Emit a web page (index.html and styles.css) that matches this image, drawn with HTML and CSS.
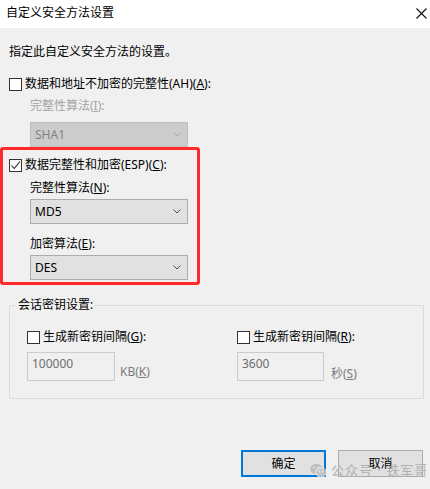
FILE: index.html
```html
<!DOCTYPE html>
<html>
<head>
<meta charset="UTF-8">
<title>自定义安全方法设置</title>
<link rel="stylesheet" href="styles.css">
</head>
<body>
<div class="dialog">
  <div class="titlebar">
    <span class="title">自定义安全方法设置</span>
    <svg class="close" width="11" height="11" viewBox="0 0 11 11"><path d="M0.5 0.5 L10.5 10.5 M10.5 0.5 L0.5 10.5" stroke="#111" stroke-width="1.1" fill="none"/></svg>
  </div>

  <div class="content">
    <p class="intro">指定此自定义安全方法的设置。</p>

    <div class="check ah"><span class="box"></span>数据和地址不加密的完整性(AH)(<u>A</u>):</div>
    <div class="indent">
      <div class="label disabled">完整性算法(<u>I</u>):</div>
      <div class="select disabled">SHA1
        <svg class="chev" width="8" height="5" viewBox="0 0 8 5"><path d="M0.5 0.5 L4 4 L7.5 0.5" stroke="#a8a8a8" fill="none"/></svg>
      </div>
    </div>

    <div class="check esp"><span class="box"><svg width="11" height="11" viewBox="0 0 11 11"><path d="M1.5 5.5 L4.2 8.5 L10 1.5" stroke="#222" stroke-width="1.1" fill="none"/></svg></span>数据完整性和加密(ESP)(<u>C</u>):</div>
    <div class="indent">
      <div class="label first">完整性算法(<u>N</u>):</div>
      <div class="select">MD5
        <svg class="chev" width="8" height="5" viewBox="0 0 8 5"><path d="M0.5 0.5 L4 4 L7.5 0.5" stroke="#555" fill="none"/></svg>
      </div>
      <div class="label second">加密算法(<u>E</u>):</div>
      <div class="select">DES
        <svg class="chev" width="8" height="5" viewBox="0 0 8 5"><path d="M0.5 0.5 L4 4 L7.5 0.5" stroke="#555" fill="none"/></svg>
      </div>
    </div>

    <fieldset class="group">
      <legend>会话密钥设置:</legend>
      <div class="cols">
        <div class="col">
          <div class="check"><span class="box"></span>生成新密钥间隔(<u>G</u>):</div>
          <div class="field">
            <div class="input">100000</div>
            <span class="unit">KB(<u>K</u>)</span>
          </div>
        </div>
        <div class="col">
          <div class="check"><span class="box"></span>生成新密钥间隔(<u>R</u>):</div>
          <div class="field">
            <div class="input short">3600</div>
            <span class="unit sec">秒(<u>S</u>)</span>
          </div>
        </div>
      </div>
    </fieldset>

    <div class="buttons">
      <button class="btn primary">确定</button>
      <button class="btn">取消</button>
    </div>
  </div>

  <div class="highlight"></div>

  <div class="watermark">
    <svg width="17" height="15" viewBox="0 0 17 15">
      <ellipse cx="6.5" cy="6" rx="6.2" ry="5.3" fill="#b9b9b9"/>
      <ellipse cx="11" cy="9.5" rx="5.4" ry="4.6" fill="#c4c4c4" stroke="#efefef" stroke-width="1"/>
      <circle cx="4.3" cy="4.6" r="0.9" fill="#efefef"/>
      <circle cx="8.4" cy="4.6" r="0.9" fill="#efefef"/>
      <circle cx="9.3" cy="8.6" r="0.7" fill="#efefef"/>
      <circle cx="12.7" cy="8.6" r="0.7" fill="#efefef"/>
    </svg>
    <span>公众号 · 铁军哥</span>
  </div>
</div>
</body>
</html>
```

FILE: styles.css
```css
  body {
    margin: 0;
    padding: 0;
    font-family: "Noto Sans", "Noto Sans CJK SC", sans-serif;
    font-size: 12px;
    color: #000;
    background-color: #f0f0f0;
  }

  .dialog {
    position: relative;
    width: 430px;
    height: 489px;
    overflow: hidden;
    background-color: #f0f0f0;
  }

  .titlebar {
    height: 28px;
    background-color: #fff;
    display: flex;
    align-items: center;
    justify-content: space-between;
    padding: 0 2px 2px 6px;
    box-sizing: border-box;
  }

  .title {
    line-height: 16px;
  }

  .close {
    display: block;
    margin-right: 1px;
  }

  .content {
    padding: 16px 6px 0 9px;
  }

  .intro {
    margin: 0;
    line-height: 16px;
  }

  .check {
    display: flex;
    align-items: center;
    line-height: 16px;
    height: 16px;
  }

  .check .box {
    width: 13px;
    height: 13px;
    border: 1px solid #333;
    background-color: #fff;
    box-sizing: border-box;
    margin-right: 3px;
    display: flex;
    align-items: center;
    justify-content: center;
  }

  .check .box svg {
    display: block;
  }

  .ah {
    margin-top: 16px;
  }

  .esp {
    margin-top: 10px;
  }

  .indent {
    padding-left: 21px;
  }

  .label {
    line-height: 16px;
    margin-top: 6px;
  }

  .label.first {
    margin-top: 7px;
  }

  .label.second {
    margin-top: 12px;
  }

  .label.disabled {
    color: #a3a3a3;
  }

  .select {
    width: 158px;
    height: 25px;
    box-sizing: border-box;
    border: 1px solid #adadad;
    background-color: #e1e1e1;
    display: flex;
    align-items: center;
    justify-content: space-between;
    padding: 0 6px 0 4px;
    margin-top: 3px;
    line-height: 16px;
  }

  .select.disabled {
    margin-top: 8px;
    background-color: #cccccc;
    border-color: #bfbfbf;
    color: #838383;
  }

  .chev {
    display: block;
  }

  .group {
    margin: 18px 0 0 0;
    padding: 0;
    border: 1px solid #dcdcdc;
    min-width: 0;
  }

  .group legend {
    margin-left: 6px;
    padding: 0 2px;
    line-height: 14px;
  }

  .cols {
    display: grid;
    grid-template-columns: 210px 1fr;
    padding: 17px 0 17px 17px;
  }

  .field {
    display: flex;
    align-items: flex-end;
    margin-top: 7px;
  }

  .input {
    width: 88px;
    height: 29px;
    box-sizing: border-box;
    border: 1px solid #cccccc;
    background-color: #f0f0f0;
    color: #6d6d6d;
    padding: 3px 4px 0;
    line-height: 16px;
  }

  .input.short {
    width: 87px;
  }

  .unit {
    color: #7a7a7a;
    line-height: 16px;
    margin: 0 0 1px 5px;
  }

  .unit.sec {
    margin-left: 7px;
    margin-bottom: -1px;
  }

  .buttons {
    display: flex;
    justify-content: flex-end;
    gap: 12px;
    margin-top: 51px;
    padding-right: 1px;
  }

  .btn {
    width: 85px;
    height: 27px;
    box-sizing: border-box;
    border: 1px solid #adadad;
    background-color: #e1e1e1;
    font-family: "Noto Sans", "Noto Sans CJK SC", sans-serif;
    font-size: 12px;
    color: #000;
    padding: 0;
    line-height: 16px;
  }

  .btn.primary {
    border: 2px solid #0078d7;
  }

  .highlight {
    position: absolute;
    left: 0;
    top: 147px;
    width: 200px;
    height: 138px;
    box-sizing: border-box;
    border: 3px solid #ff2b2b;
    border-radius: 3px;
  }

  .watermark {
    position: absolute;
    left: 310px;
    top: 462px;
    display: flex;
    align-items: center;
    gap: 4px;
    color: #a9a9a9;
    font-size: 13px;
    letter-spacing: 1px;
    line-height: 16px;
    opacity: 0.85;
  }

  .watermark svg {
    display: block;
  }
```
